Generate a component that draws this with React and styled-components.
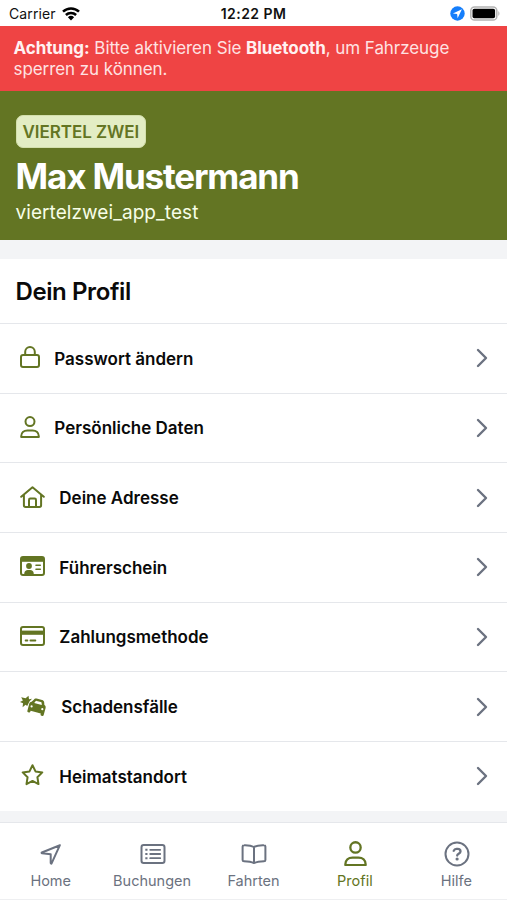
import React from "react";
import styled, { createGlobalStyle } from "styled-components";

const GlobalStyle = createGlobalStyle`
  * {
    box-sizing: border-box;
  }
  body {
    margin: 0;
    background: #f3f4f6;
    font-family: Inter, "Liberation Sans", sans-serif;
    -webkit-font-smoothing: antialiased;
  }
`;

const LockIcon = () => (
  <Icon width="20" height="22" viewBox="0 0 20 22">
    <rect x="1" y="9" width="18" height="12" rx="2" />
    <path d="M5.2 8.8v-3a4.8 4.8 0 0 1 9.6 0v3" />
  </Icon>
);

const UserIcon = ({ size = 20 }) => (
  <Icon width={size} height={size * 1.1} viewBox="0 0 20 22">
    <circle cx="10" cy="5.6" r="4.5" />
    <path d="M1.2 20.9v-.6c0-3.7 2.6-5.9 6.2-5.9h5.2c3.6 0 6.2 2.2 6.2 5.9v.6z" />
  </Icon>
);

const HouseIcon = () => (
  <Icon width="25" height="22" viewBox="0 0 25 22">
    <path d="M1.2 10.8 12.5 1.2l11.3 9.6M3.9 8.9v10.3c0 1 .7 1.7 1.7 1.7h13.8c1 0 1.7-.7 1.7-1.7V8.9" />
    <path d="M9 20.7v-6.8c0-.8.5-1.3 1.3-1.3h4.4c.8 0 1.3.5 1.3 1.3v6.8" />
  </Icon>
);

const LicenseIcon = () => (
  <Icon width="25" height="20" viewBox="0 0 25 20">
    <rect x="1" y="1" width="23" height="18" rx="2" />
    <path d="M1 1.5h23v4.3H1z" fill="currentColor" stroke="none" />
    <circle cx="9" cy="10" r="2.9" fill="currentColor" stroke="none" />
    <path d="M4.3 19v-1.4c0-2.4 1.6-3.7 3.4-3.7h2.6c1.8 0 3.4 1.3 3.4 3.7V19z" fill="currentColor" stroke="none" />
    <path d="M16 9.3h4.3M16 13.3h4.3" strokeWidth="1.6" />
  </Icon>
);

const CardIcon = () => (
  <Icon width="25" height="20" viewBox="0 0 25 20">
    <rect x="1" y="1" width="23" height="18" rx="2" />
    <path d="M1 4.6h23v4.2H1z" fill="currentColor" stroke="none" />
    <path d="M5.6 14.5h1.8M10.4 14.5h5" strokeWidth="1.8" />
  </Icon>
);

const CrashIcon = () => (
  <Icon width="27" height="22" viewBox="0 0 27 22">
    <path
      d="M5.6 3.3 8.5.8l.5 3.4 3-.4-2.4 2.5-2.4 4.8-1.6-1.3-3 2.4.4-3.9L0 7.1l2.9-1.5L1.2 2.2z"
      fill="currentColor"
      stroke="none"
    />
    <path
      fillRule="evenodd"
      d="M13.8 4.8c.6-1.1 1.6-1.6 2.8-1.3l5.5 1.4c1.3.3 2 1.2 2.1 2.5l.2 2.6c1.1.7 1.5 1.7 1.2 2.9l-1.9 7.2c-.2.8-.8 1.1-1.5.9l-.7-.2c-.7-.2-1.1-.8-.9-1.5l.2-.8-10.2-2.7-.2.8c-.2.7-.8 1-1.5.8l-.7-.2c-.7-.2-1-.8-.8-1.5l1.9-7.1c.3-1.2 1.1-1.8 2.3-1.9zM14.2 8l7.6 2-.2-2.1c0-.5-.3-.8-.8-.9l-4.1-1.1c-.6-.2-1 0-1.3.5zM11.6 10.3a1.1 1.1 0 1 0 0 2.2 1.1 1.1 0 0 0 0-2.2zm10.7 2.8a1.1 1.1 0 1 0 0 2.2 1.1 1.1 0 0 0 0-2.2z"
      fill="currentColor"
      stroke="none"
    />
  </Icon>
);

const StarIcon = () => (
  <Icon width="25" height="22" viewBox="0 0 25 22">
    <path d="m12.5 1.2 3 6.2 6.8 1-4.9 4.8 1.1 6.9-6-3.2-6 3.2 1.1-6.9-4.9-4.8 6.8-1z" />
  </Icon>
);

const ArrowIcon = () => (
  <Icon width="26" height="26" viewBox="0 0 26 26">
    <path d="M21.9 4.2 3.9 11.5c-.5.2-.4.8.1.8l8.7 1v8.8c0 .6.7.7.9.2z" />
  </Icon>
);

const ListIcon = () => (
  <Icon width="26" height="26" viewBox="0 0 26 26">
    <rect x="1.5" y="4" width="23" height="18" rx="2.2" />
    <path d="M10.2 8.8h10M10.2 13h10M10.2 17.2h10" strokeWidth="1.8" />
    <path d="M5.3 8.8h2.2M5.3 13h2.2M5.3 17.2h2.2" strokeWidth="2.1" strokeLinecap="butt" />
  </Icon>
);

const BookIcon = () => (
  <Icon width="26" height="26" viewBox="0 0 26 26">
    <path d="M13 6C10.8 4.7 6.5 4.1 3.1 4.2c-.9 0-1.5.6-1.5 1.3V19c0 .8.6 1.2 1.4 1.2 3.5.1 7.1.4 10 1.8 2.9-1.4 6.5-1.7 10-1.8.8 0 1.4-.4 1.4-1.2V5.5c0-.7-.6-1.3-1.5-1.3C19.5 4.1 15.2 4.7 13 6zM13 6v15.7" />
  </Icon>
);

const HelpIcon = () => (
  <Icon width="26" height="26" viewBox="0 0 26 26">
    <circle cx="13" cy="13" r="11.5" />
    <path d="M9.7 9.8c.5-1.3 1.4-1.9 2.8-1.9h1.1c1.6 0 2.9 1.1 2.9 2.6 0 2.2-3.3 2.3-3.3 4" strokeWidth="2.3" />
    <circle cx="13.1" cy="18" r="1.6" fill="currentColor" stroke="none" />
  </Icon>
);

const WifiIcon = () => (
  <svg width="18" height="14" viewBox="0 0 18 14" fill="none" stroke="#000" strokeWidth="2.5">
    <path d="M1 4.7a11.6 11.6 0 0 1 16 0M3.9 8a7.3 7.3 0 0 1 10.2 0" />
    <path d="M9 13.4 5.9 10.3a4.5 4.5 0 0 1 6.2 0z" fill="#000" stroke="none" />
  </svg>
);

const LocationIcon = () => (
  <svg width="15" height="15" viewBox="0 0 15 15">
    <circle cx="7.5" cy="7.5" r="7.2" fill="#157efb" />
    <path d="M11.9 3.2 2.9 7.4l4.2.6.5 4.2z" fill="#fff" />
  </svg>
);

const BatteryIcon = () => (
  <svg width="30" height="15" viewBox="0 0 30 15">
    <rect x=".8" y=".9" width="26" height="13.2" rx="3.7" fill="#fff" stroke="#b3b3b3" strokeWidth="1.5" />
    <rect x="2.5" y="2.7" width="22.6" height="9.6" rx="1.8" fill="#000" />
    <path d="M28.3 5.2c1.5.5 1.5 4 0 4.5z" fill="#b3b3b3" />
  </svg>
);

const ChevronIcon = () => (
  <Chevron width="12" height="20" viewBox="0 0 12 20">
    <path d="m2 2 8 8-8 8" />
  </Chevron>
);

const profileItems = [
  { label: "Passwort ändern", icon: <LockIcon />, iconWidth: 20 },
  { label: "Persönliche Daten", icon: <UserIcon />, iconWidth: 20 },
  { label: "Deine Adresse", icon: <HouseIcon />, iconWidth: 25 },
  { label: "Führerschein", icon: <LicenseIcon />, iconWidth: 25 },
  { label: "Zahlungsmethode", icon: <CardIcon />, iconWidth: 25 },
  { label: "Schadensfälle", icon: <CrashIcon />, iconWidth: 27 },
  { label: "Heimatstandort", icon: <StarIcon />, iconWidth: 25 },
];

const tabs = [
  { label: "Home", icon: <ArrowIcon /> },
  { label: "Buchungen", icon: <ListIcon /> },
  { label: "Fahrten", icon: <BookIcon /> },
  { label: "Profil", icon: <UserIcon size={23} />, active: true },
  { label: "Hilfe", icon: <HelpIcon /> },
];

const App = () => {
  return (
    <Screen>
      <GlobalStyle />
      <StatusBar>
        <Carrier>
          Carrier <WifiIcon />
        </Carrier>
        <Clock>12:22 PM</Clock>
        <StatusIcons>
          <LocationIcon />
          <BatteryIcon />
        </StatusIcons>
      </StatusBar>
      <Alert>
        <b>Achtung:</b> Bitte aktivieren Sie <b>Bluetooth</b>, um Fahrzeuge
        <br />
        sperren zu können.
      </Alert>
      <Header>
        <Badge>VIERTEL ZWEI</Badge>
        <UserName>Max Mustermann</UserName>
        <Account>viertelzwei_app_test</Account>
      </Header>
      <Card>
        <CardTitle>Dein Profil</CardTitle>
        {profileItems.map((item) => (
          <Row key={item.label}>
            <RowIcon $width={item.iconWidth}>{item.icon}</RowIcon>
            <RowLabel>{item.label}</RowLabel>
            <ChevronIcon />
          </Row>
        ))}
      </Card>
      <TabBar>
        {tabs.map((tab) => (
          <Tab key={tab.label} $active={tab.active}>
            <TabIcon>{tab.icon}</TabIcon>
            <span>{tab.label}</span>
          </Tab>
        ))}
      </TabBar>
    </Screen>
  );
};

const Screen = styled.div`
  display: flex;
  flex-direction: column;
  height: 900px;
  overflow: hidden;
  background: #f3f4f6;
`;

const Icon = styled.svg`
  display: block;
  flex: none;
  fill: none;
  stroke: currentColor;
  stroke-width: 2;
  stroke-linecap: round;
  stroke-linejoin: round;
`;

const Chevron = styled(Icon)`
  color: #6b7280;
  stroke-width: 2.4;
`;

const StatusBar = styled.header`
  display: grid;
  grid-template-columns: 1fr auto 1fr;
  align-items: center;
  height: 25.5px;
  padding: 2px 7px 0 9px;
  background: #fff;
  color: #111;
  font-size: 14px;
`;

const Carrier = styled.div`
  display: flex;
  align-items: center;
  gap: 6px;
  letter-spacing: 0.1px;
`;

const Clock = styled.div`
  margin-right: 2px;
  font-weight: 600;
  letter-spacing: 0.45px;
`;

const StatusIcons = styled.div`
  display: flex;
  justify-content: flex-end;
  align-items: center;
  gap: 5px;
`;

const Alert = styled.div`
  height: 65.5px;
  padding: 12.5px 13.5px 0;
  background: #ef4444;
  color: #fee2e2;
  font-size: 17px;
  line-height: 21px;
  letter-spacing: -0.07px;
  white-space: nowrap;

  b {
    font-weight: 700;
    color: #fff1f1;
  }
`;

const Header = styled.section`
  display: flex;
  flex-direction: column;
  align-items: flex-start;
  height: 149px;
  padding: 24px 15.5px 0;
  background: #637523;
  color: #fff;
`;

const Badge = styled.span`
  height: 33px;
  padding: 0 6px;
  border: 1px solid #d3dfac;
  border-radius: 7px;
  background: #e3edc4;
  color: #637523;
  font-size: 17px;
  font-weight: 600;
  line-height: 32px;
  letter-spacing: -0.05px;
`;

const UserName = styled.h1`
  margin: 8px 0 0;
  font-size: 35px;
  font-weight: 700;
  line-height: 41px;
  letter-spacing: -1.15px;
`;

const Account = styled.div`
  margin-top: 4px;
  color: #f7fee7;
  font-size: 19px;
  line-height: 24px;
  letter-spacing: 0.07px;
`;

const Card = styled.section`
  margin-top: 18.5px;
  background: #fff;
`;

const CardTitle = styled.h2`
  height: 64.5px;
  margin: 0;
  padding: 0 15.5px;
  color: #0a0a0a;
  font-size: 24px;
  font-weight: 600;
  line-height: 66px;
  letter-spacing: -0.4px;
`;

const Row = styled.div`
  display: flex;
  align-items: center;
  height: 69.67px;
  padding: 0 19px 0 20px;
  border-top: 1px solid #e5e7eb;
`;

const RowIcon = styled.div`
  width: ${(props) => props.$width}px;
  margin: 0 14.3px 2px 0;
  color: #637523;
`;

const RowLabel = styled.div`
  flex: 1;
  padding-top: 1px;
  color: #0a0a0a;
  font-size: 17px;
  font-weight: 600;
`;

const TabBar = styled.nav`
  display: grid;
  grid-template-columns: repeat(5, 1fr);
  height: 78.5px;
  margin-top: auto;
  padding-top: 18px;
  border-top: 1px solid #e5e7eb;
  border-bottom: 1px solid #eeeff1;
  background: #fff;
`;

const Tab = styled.div`
  display: flex;
  flex-direction: column;
  align-items: center;
  color: ${(props) => (props.$active ? "#637523" : "#6b7280")};
  font-size: 14.5px;
  line-height: 20px;
`;

const TabIcon = styled.div`
  display: flex;
  align-items: center;
  justify-content: center;
  height: 26px;
  margin: 0 0 4px 1px;
`;

export default App;
